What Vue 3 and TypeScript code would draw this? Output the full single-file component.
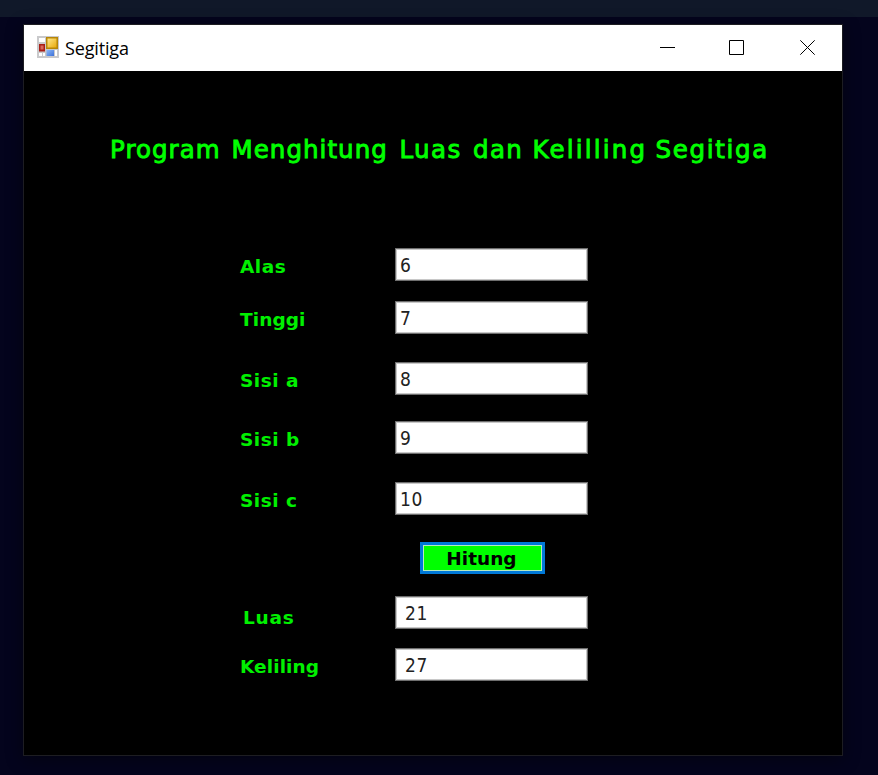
<script setup lang="ts">
import { ref } from 'vue'

interface Field {
  id: string
  label: string
  value: string
}

const headingWords: string[] = ['Program', 'Menghitung', 'Luas', 'dan', 'Kelilling', 'Segitiga']

const inputs = ref<Field[]>([
  { id: 'alas', label: 'Alas', value: '6' },
  { id: 'tinggi', label: 'Tinggi', value: '7' },
  { id: 'sisi-a', label: 'Sisi a', value: '8' },
  { id: 'sisi-b', label: 'Sisi b', value: '9' },
  { id: 'sisi-c', label: 'Sisi c', value: '10' },
])

const results = ref<Field[]>([
  { id: 'luas', label: 'Luas', value: '21' },
  { id: 'keliling', label: 'Keliling', value: '27' },
])

function hitung(): void {
  const [alas, tinggi, a, b, c] = inputs.value.map((f) => Number(f.value))
  results.value[0].value = String((alas * tinggi) / 2)
  results.value[1].value = String(a + b + c)
}
</script>

<template>
  <div class="desktop">
    <div class="strip"></div>
    <main class="window">
      <header class="titlebar">
        <svg class="app-icon" width="22" height="22" viewBox="0 0 22 22">
          <defs>
            <linearGradient id="gold" x1="0" y1="0" x2="1" y2="1">
              <stop offset="0" stop-color="#ffe88b" />
              <stop offset="1" stop-color="#e9aa0b" />
            </linearGradient>
            <linearGradient id="blue" x1="0" y1="0" x2="1" y2="1">
              <stop offset="0" stop-color="#8cb9f8" />
              <stop offset="1" stop-color="#3d70d8" />
            </linearGradient>
          </defs>
          <rect width="22" height="22" fill="#c9c9cb" />
          <path d="M2 2h6v4H2zM2 17h3v3H2zM6 17h2v3H6zM18 14h2v6h-2z" fill="#fff" />
          <rect x="9" y="1" width="12" height="12" fill="#b78608" />
          <rect x="10.5" y="2.5" width="9" height="9" fill="url(#gold)" />
          <rect x="2" y="8" width="6" height="7.5" fill="#a91e16" />
          <rect x="3.5" y="9.5" width="3" height="4" fill="#d9685b" />
          <rect x="9.5" y="14" width="7.5" height="6" fill="url(#blue)" />
        </svg>
        <span class="caption">Segitiga</span>
        <svg class="controls" width="160" height="46" viewBox="0 0 160 46">
          <g fill="none" stroke="#000" stroke-width="1">
            <path d="M0 22.5h15" />
            <path d="M69.5 15.5h14v14h-14z" />
            <path d="M140.3 15.3l14.4 14.4M154.7 15.3l-14.4 14.4" />
          </g>
        </svg>
      </header>

      <form class="body" @submit.prevent="hitung">
        <h1 class="heading">
          <span v-for="word in headingWords" :key="word" :class="word.toLowerCase() + '-word'">{{ word }}</span>
        </h1>
        <div v-for="f in inputs" :key="f.id" class="row" :class="f.id">
          <label class="label" :for="f.id">{{ f.label }}</label>
          <input :id="f.id" v-model="f.value" class="box" type="text" />
        </div>
        <button class="calc" type="submit">Hitung</button>
        <div v-for="f in results" :key="f.id" class="row" :class="f.id">
          <label class="label" :for="f.id">{{ f.label }}</label>
          <input :id="f.id" v-model="f.value" class="box result" type="text" readonly />
        </div>
      </form>
    </main>
  </div>
</template>

<style>
body {
  margin: 0;
  background: #04041b;
}
</style>

<style scoped>
.desktop {
  box-sizing: border-box;
  width: 878px;
  height: 775px;
  overflow: hidden;
  background: #04041d;
  font-family: "DejaVu Sans", sans-serif;
}
.strip {
  height: 17px;
  background: #101829;
}
.window {
  box-sizing: border-box;
  width: 820px;
  height: 732px;
  margin: 7px 0 0 23px;
  border: 1px solid #1d1d22;
  background: #000;
  box-shadow: 0 3px 16px rgba(0, 0, 0, 0.45);
}
.titlebar {
  display: flex;
  align-items: center;
  height: 46px;
  background: #fff;
}
.app-icon {
  flex: none;
  margin: 0 0 2px 13px;
}
.caption {
  margin-left: 6px;
  color: #000;
  font: 18px/24px "Open Sans", sans-serif;
  letter-spacing: -0.15px;
}
.controls {
  margin-left: auto;
  margin-right: 22px;
}
.body {
  display: flex;
  flex-direction: column;
  align-items: flex-start;
}
.heading {
  display: grid;
  grid-template-columns: 121.5px 168px 73.5px 59.5px 123px auto;
  margin: 64px 0 0 86px;
  height: 30px;
  color: #00ff00;
  font-size: 24.5px;
  font-weight: 400;
  line-height: 30px;
  letter-spacing: 1.05px;
  white-space: nowrap;
  -webkit-text-stroke: 0.9px #00ff00;
}
.luas-word,
.dan-word {
  letter-spacing: 1.4px;
}
.kelilling-word {
  letter-spacing: 2.2px;
}
.segitiga-word {
  letter-spacing: 1.7px;
}
.row {
  display: flex;
  height: 33px;
  margin-left: 216px;
}
.alas {
  margin-top: 83px;
}
.tinggi {
  margin-top: 20px;
}
.sisi-a {
  margin-top: 28px;
}
.sisi-b {
  margin-top: 26px;
}
.sisi-c {
  margin-top: 28px;
}
.luas {
  margin-top: 22px;
}
.keliling {
  margin-top: 19px;
}
.label {
  width: 155px;
  color: #00f000;
  font-size: 18.5px;
  font-weight: 700;
  line-height: 38px;
  letter-spacing: 0.5px;
  white-space: nowrap;
}
.tinggi .label,
.keliling .label {
  letter-spacing: 0.1px;
}
.luas .label {
  box-sizing: border-box;
  padding: 3px 0 0 3px;
  letter-spacing: 0.8px;
}
.box {
  box-sizing: border-box;
  width: 193px;
  height: 33px;
  padding: 0 0 0 4px;
  border: 1px solid #6e6e6e;
  border-radius: 0;
  outline: none;
  background: #fff;
  box-shadow: inset 0 0 0 1px #c8c8c8;
  color: #222;
  font-family: "DejaVu Sans", sans-serif;
  font-size: 19px;
  font-stretch: condensed;
  letter-spacing: 0.6px;
}
.result {
  padding-left: 9px;
}
.calc {
  box-sizing: border-box;
  width: 125px;
  height: 32px;
  margin: 27px 0 0 396px;
  padding: 2px 2px 0 0;
  border: 3px solid #0078d7;
  background: #00ff00;
  box-shadow: inset 0 0 0 1px #b5e8c0;
  color: #000;
  font: 700 18.5px/24px "DejaVu Sans", sans-serif;
}
</style>
